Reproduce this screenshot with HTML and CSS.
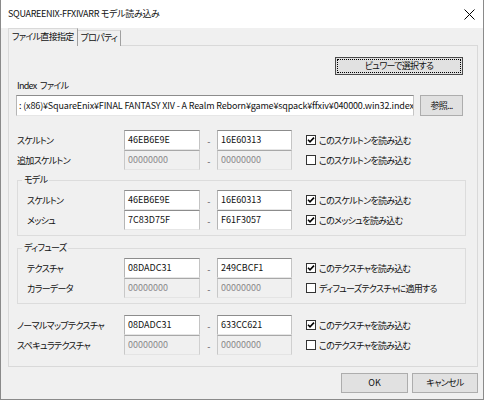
FILE: index.html
```html
<!DOCTYPE html>
<html lang="ja">
<head>
<meta charset="utf-8">
<link rel="stylesheet" href="styles.css">
</head>
<body>
<div class="window">
  <div class="titlebar">
    <span class="title">SQUAREENIX-FFXIVARR モデル読み込み</span>
    <svg class="close" width="11" height="11" viewBox="0 0 11 11"><path d="M0.5 0.5 L10.5 10.5 M10.5 0.5 L0.5 10.5" stroke="#000" stroke-width="1" fill="none"/></svg>
  </div>
  <div class="tabs">
    <div class="tab active">ファイル直接指定</div>
    <div class="tab">プロパティ</div>
  </div>
  <div class="panel">
    <div class="viewer-row"><div class="btn focus viewer">ビュワーで選択する</div></div>
    <div class="idx-label">Index ファイル</div>
    <div class="path-row">
      <div class="tb path">: (x86)¥SquareEnix¥FINAL FANTASY XIV - A Realm Reborn¥game¥sqpack¥ffxiv¥040000.win32.index</div>
      <div class="btn browse">参照...</div>
    </div>

    <div class="rows top">
      <div class="row">
        <div class="lbl">スケルトン</div>
        <div class="tb id">46EB6E9E</div><div class="dash">-</div><div class="tb id2">16E60313</div>
        <div class="chk on"><svg viewBox="0 0 8 8" width="8" height="8"><path d="M1 3.8 L3 5.8 L7 1.6" stroke="#000" stroke-width="1.6" fill="none"/></svg></div><div class="chklbl">このスケルトンを読み込む</div>
      </div>
      <div class="row">
        <div class="lbl">追加スケルトン</div>
        <div class="tb id dis">00000000</div><div class="dash">-</div><div class="tb id2 dis">00000000</div>
        <div class="chk"></div><div class="chklbl">このスケルトンを読み込む</div>
      </div>
    </div>

    <fieldset class="group g1">
      <legend>モデル</legend>
      <div class="row">
        <div class="lbl">スケルトン</div>
        <div class="tb id">46EB6E9E</div><div class="dash">-</div><div class="tb id2">16E60313</div>
        <div class="chk on"><svg viewBox="0 0 8 8" width="8" height="8"><path d="M1 3.8 L3 5.8 L7 1.6" stroke="#000" stroke-width="1.6" fill="none"/></svg></div><div class="chklbl">このスケルトンを読み込む</div>
      </div>
      <div class="row">
        <div class="lbl">メッシュ</div>
        <div class="tb id">7C83D75F</div><div class="dash">-</div><div class="tb id2">F61F3057</div>
        <div class="chk on"><svg viewBox="0 0 8 8" width="8" height="8"><path d="M1 3.8 L3 5.8 L7 1.6" stroke="#000" stroke-width="1.6" fill="none"/></svg></div><div class="chklbl">このメッシュを読み込む</div>
      </div>
    </fieldset>

    <fieldset class="group g2">
      <legend>ディフューズ</legend>
      <div class="row">
        <div class="lbl">テクスチャ</div>
        <div class="tb id">08DADC31</div><div class="dash">-</div><div class="tb id2">249CBCF1</div>
        <div class="chk on"><svg viewBox="0 0 8 8" width="8" height="8"><path d="M1 3.8 L3 5.8 L7 1.6" stroke="#000" stroke-width="1.6" fill="none"/></svg></div><div class="chklbl">このテクスチャを読み込む</div>
      </div>
      <div class="row">
        <div class="lbl">カラーデータ</div>
        <div class="tb id dis">00000000</div><div class="dash">-</div><div class="tb id2 dis">00000000</div>
        <div class="chk"></div><div class="chklbl">ディフューズテクスチャに適用する</div>
      </div>
    </fieldset>

    <div class="rows bottom">
      <div class="row">
        <div class="lbl">ノーマルマップテクスチャ</div>
        <div class="tb id">08DADC31</div><div class="dash">-</div><div class="tb id2">633CC621</div>
        <div class="chk on"><svg viewBox="0 0 8 8" width="8" height="8"><path d="M1 3.8 L3 5.8 L7 1.6" stroke="#000" stroke-width="1.6" fill="none"/></svg></div><div class="chklbl">このテクスチャを読み込む</div>
      </div>
      <div class="row">
        <div class="lbl">スペキュラテクスチャ</div>
        <div class="tb id dis">00000000</div><div class="dash">-</div><div class="tb id2 dis">00000000</div>
        <div class="chk"></div><div class="chklbl">このテクスチャを読み込む</div>
      </div>
    </div>
  </div>
  <div class="footer">
    <div class="btn ok">OK</div>
    <div class="btn cancel">キャンセル</div>
  </div>
</div>
</body>
</html>
```

FILE: styles.css
```css
* { box-sizing: border-box; }
html, body { margin: 0; padding: 0; }
body {
  width: 484px;
  height: 400px;
  background: #f0f0f0;
  font-family: "Noto Sans CJK JP", "Noto Sans", sans-serif;
  font-size: 9px;
  color: #111;
  font-feature-settings: "palt";
  letter-spacing: -0.7px;
  overflow: hidden;
}
.window {
  width: 484px;
  height: 400px;
  border: 1px solid #8a8a8a;
  border-top: none;
  display: flex;
  flex-direction: column;
  background: #f0f0f0;
}
.titlebar {
  height: 28px;
  flex: none;
  background: #fff;
  display: flex;
  align-items: center;
  justify-content: space-between;
  padding: 0 8px 0 7px;
}
.title { font-size: 9px; line-height: 14px; letter-spacing: -0.3px; }
.close { display: block; }

.tabs {
  display: flex;
  align-items: flex-end;
  height: 18px;
  margin: 0 0 -1px 7px;
  position: relative;
  z-index: 1;
}
.tab {
  height: 16px;
  line-height: 14px;
  padding: 0 3px;
  border: 1px solid #d9d9d9;
  border-bottom: none;
  border-left: none;
  border-right-color: #a0a0a0;
  background: #f0f0f0;
  white-space: nowrap;
}
.tab.active {
  height: 18px;
  line-height: 16px;
  padding: 0 3px;
  border-left: 1px solid #d9d9d9;
  border-right: 1px solid #a0a0a0;
}

.panel {
  flex: none;
  width: 470px;
  height: 322px;
  margin-left: 7px;
  border: 1px solid #d9d9d9;
  background: #f0f0f0;
}
.viewer-row {
  display: flex;
  justify-content: flex-end;
  padding: 11px 14px 0 0;
}
.btn {
  background: #e1e1e1;
  border: 1px solid #adadad;
  display: flex;
  align-items: center;
  justify-content: center;
  line-height: 14px;
  white-space: nowrap;
}
.btn.viewer {
  width: 128px;
  height: 18px;
  border-color: #4a4a4a;
}
.btn.focus {
  outline: 1px dotted #000;
  outline-offset: -3px;
}
.idx-label {
  margin-top: 4px;
  line-height: 14px;
  padding-left: 8px;
  word-spacing: 2px;
}
.path-row {
  display: flex;
  gap: 6px;
  margin-top: 2px;
  padding-left: 7px;
  height: 21px;
}
.tb {
  height: 20px;
  line-height: 18px;
  padding: 0 3px;
  background: #fff;
  border: 1px solid;
  border-color: #8c8c8c #c4c4c4 #e6e6e6 #b5b5b5;
  white-space: nowrap;
  overflow: hidden;
  flex: none;
  letter-spacing: 0;
}
.tb.path {
  width: 398px;
  height: 21px;
  line-height: 19px;
  padding-left: 2px;
  letter-spacing: -0.15px;
}
.btn.browse { width: 43px; height: 21px; }
.tb.dis {
  background: #f0f0f0;
  color: #8a8a8a;
  border-color: #a8a8a8 #d0d0d0 #e4e4e4 #c8c8c8;
}

.rows { padding-left: 8px; }
.rows.top { margin-top: 14px; }
.rows.bottom { margin-top: 11px; }
.row {
  display: flex;
  align-items: center;
  height: 20px;
}
.lbl { width: 107px; flex: none; white-space: nowrap; }
.group .lbl { width: 97px; }
.tb.id { width: 76px; }
.tb.id2 { width: 75px; }
.dash { width: 17px; text-align: center; color: #555; flex: none; padding-top: 3px; }
.chk {
  width: 10px;
  height: 10px;
  margin-left: 14px;
  border: 1px solid #333;
  background: #fff;
  display: flex;
  align-items: center;
  justify-content: center;
  flex: none;
}
.chk svg { display: block; }
.chklbl { margin-left: 3px; white-space: nowrap; }

.group {
  width: 449px;
  margin: 4px 0 0 8px;
  padding: 4px 0 5px 9px;
  border: 1px solid #dcdcdc;
  min-width: 0;
}
.group.g2 { margin-top: 6px; }
.group legend {
  line-height: 12px;
  padding: 0 2px;
  margin-left: -5px;
}

.footer {
  display: flex;
  justify-content: flex-end;
  gap: 4px;
  margin-top: 6px;
  padding-right: 5px;
}
.btn.ok { width: 67px; height: 20px; letter-spacing: 0; }
.btn.cancel { width: 66px; height: 20px; }
```
